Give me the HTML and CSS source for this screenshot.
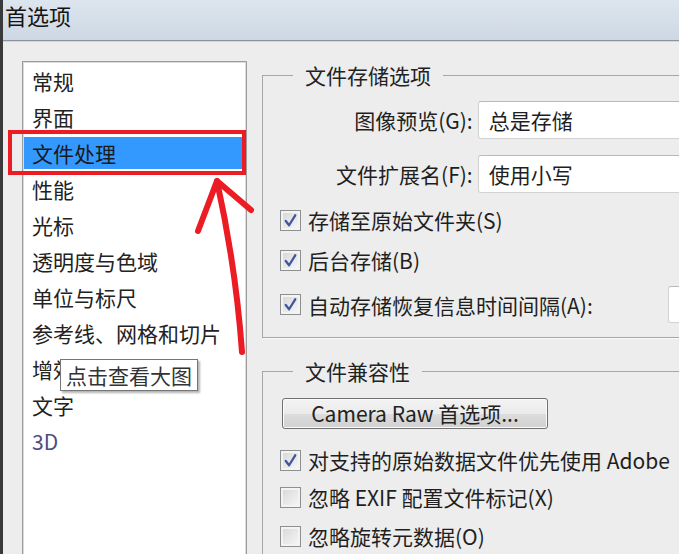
FILE: index.html
```html
<!DOCTYPE html>
<html>
<head>
  <title>首选项</title>
  <meta charset="utf-8">
  <link rel="stylesheet" href="styles.css">
</head>
<body>
  <div class="window">
    <div class="titlebar">首选项</div>

    <div class="content">
      <ul class="nav">
        <li>常规</li>
        <li>界面</li>
        <li class="active">文件处理</li>
        <li>性能</li>
        <li>光标</li>
        <li>透明度与色域</li>
        <li>单位与标尺</li>
        <li>参考线、网格和切片</li>
        <li>增效工具</li>
        <li>文字</li>
        <li class="dim">3D</li>
      </ul>

      <div class="panel">
        <fieldset class="group group-save">
          <legend>文件存储选项</legend>
          <div class="field-row first">
            <label>图像预览(G):</label>
            <div class="select">总是存储</div>
          </div>
          <div class="field-row">
            <label>文件扩展名(F):</label>
            <div class="select">使用小写</div>
          </div>
          <div class="check-row r1">
            <span class="box checked"><svg viewBox="0 0 20 20"><path d="M5 10.5 L8.5 15 L15 4.5"/></svg></span>
            <span>存储至原始文件夹(S)</span>
          </div>
          <div class="check-row r2">
            <span class="box checked"><svg viewBox="0 0 20 20"><path d="M5 10.5 L8.5 15 L15 4.5"/></svg></span>
            <span>后台存储(B)</span>
          </div>
          <div class="check-row r3">
            <span class="box checked"><svg viewBox="0 0 20 20"><path d="M5 10.5 L8.5 15 L15 4.5"/></svg></span>
            <span>自动存储恢复信息时间间隔(A):</span>
            <div class="num-input"></div>
          </div>
        </fieldset>

        <fieldset class="group group-compat">
          <legend>文件兼容性</legend>
          <div class="btn">Camera Raw 首选项...</div>
          <div class="check-row c1">
            <span class="box checked"><svg viewBox="0 0 20 20"><path d="M5 10.5 L8.5 15 L15 4.5"/></svg></span>
            <span>对支持的原始数据文件优先使用 Adobe</span>
          </div>
          <div class="check-row c2">
            <span class="box"></span>
            <span>忽略 EXIF 配置文件标记(X)</span>
          </div>
          <div class="check-row c3">
            <span class="box"></span>
            <span>忽略旋转元数据(O)</span>
          </div>
        </fieldset>
      </div>
    </div>

    <div class="tooltip">点击查看大图</div>

    <!-- red hand-drawn markup over the screenshot -->
    <svg class="markup" viewBox="0 0 679 554">
      <rect x="10" y="132" width="234" height="41" />
      <path d="M242 352 Q236 268 217 181" />
      <path d="M198 231 L217 181 L251 210" />
    </svg>
  </div>
</body>
</html>
```

FILE: styles.css
```css
* {
  margin: 0;
  padding: 0;
  box-sizing: border-box;
}

body {
  font-family: "Noto Sans CJK SC", "Noto Sans", sans-serif;
  color: #1f1f1f;
  background: #ededed;
  overflow: hidden;
}

.window {
  position: relative;
  width: 679px;
  height: 554px;
  overflow: hidden;
  background: #ededed;
  border-left: 3px solid #3a3a3a;
}

.titlebar {
  height: 41px;
  padding-left: 2px;
  font-size: 22px;
  line-height: 30px;
  color: #141414;
  background: linear-gradient(180deg, #dde5ee 0%, #cdd8e4 100%);
  border-bottom: 1px solid #8c939a;
  box-shadow: 0 1px 0 #d6d6d6;
}

.content {
  display: flex;
  padding: 20px 0 0 19px;
}

/* left category list */
.nav {
  list-style: none;
  width: 225px;
  height: 520px;
  flex-shrink: 0;
  background: #fff;
  border: 1px solid #9c9c9c;
  box-shadow: inset 0 0 0 1px #dcdcdc;
  padding: 3px 3px 0 1px;
}

.nav li {
  height: 32px;
  margin-bottom: 4px;
  padding-left: 8px;
  font-size: 21px;
  line-height: 32px;
  color: #222;
  white-space: nowrap;
}

.nav li.active {
  background: #3399ff;
  color: #1a1a1a;
}

.nav li.dim {
  color: #4d4d82;
}

/* right settings panel */
.panel {
  width: 470px;
  flex-shrink: 0;
  margin: 2px 0 0 15px;
}

.group {
  border: 1px solid #a6a6a6;
  box-shadow: 1px 1px 0 #fafafa;
  padding: 0 0 14px 17px;
  min-width: 0;
}

.group-compat {
  margin-top: 21px;
  height: 300px;
}

.group legend {
  margin-left: 13px;
  padding: 0 12px;
  font-size: 21px;
  line-height: 24px;
  color: #222;
}

.field-row {
  display: flex;
  align-items: center;
  height: 38px;
  margin-top: 16px;
  font-size: 21px;
}

.field-row.first {
  margin-top: 14px;
}

.field-row label {
  width: 198px;
  text-align: right;
  white-space: nowrap;
}

.select {
  width: 260px;
  height: 38px;
  margin-left: 5px;
  padding-left: 10px;
  display: flex;
  align-items: center;
  background: #fff;
  border: 1px solid #d2d2d2;
  border-top-color: #b9b9b9;
  border-radius: 3px;
}

.check-row {
  display: flex;
  align-items: center;
  height: 30px;
  font-size: 21px;
  white-space: nowrap;
}

.check-row.r1 { margin-top: 12px; }
.check-row.r2 { margin-top: 10px; }
.check-row.r3 { margin-top: 11px; height: 37px; }
.check-row.c1 { margin-top: 16px; }
.check-row.c2 { margin-top: 7px; }
.check-row.c3 { margin-top: 9px; }

.box {
  width: 21px;
  height: 21px;
  flex-shrink: 0;
  margin-right: 7px;
  border: 1px solid #8e8f8f;
  background: linear-gradient(135deg, #d6d6d6 0%, #f8f8f8 100%);
  box-shadow: inset 0 0 0 2px #f3f3f3;
}

.box svg {
  display: block;
  width: 19px;
  height: 19px;
}

.box svg path {
  fill: none;
  stroke: #3f56a0;
  stroke-width: 2.4;
  stroke-linecap: round;
  stroke-linejoin: round;
}

.num-input {
  width: 63px;
  height: 37px;
  margin-left: auto;
  background: #fff;
  border: 1px solid #d2d2d2;
  border-top-color: #b9b9b9;
  border-radius: 3px;
}

.btn {
  width: 266px;
  height: 31px;
  margin: 15px 0 0 2px;
  font-size: 21px;
  line-height: 28px;
  text-align: center;
  color: #222;
  border: 1px solid #707070;
  border-radius: 3px;
  background: linear-gradient(180deg, #f3f3f3 0%, #ebebeb 50%, #dddddd 51%, #d0d0d0 100%);
  box-shadow: inset 0 0 0 1px #fbfbfb;
}

/* overlays */
.tooltip {
  position: absolute;
  left: 57px;
  top: 359px;
  width: 138px;
  height: 32px;
  padding-left: 5px;
  font-size: 21px;
  line-height: 30px;
  color: #333;
  background: #fff;
  border: 1px solid #767676;
  box-shadow: 2px 2px 2px rgba(0, 0, 0, 0.3);
  white-space: nowrap;
}

.markup {
  position: absolute;
  left: -3px;
  top: 0;
  width: 679px;
  height: 554px;
  pointer-events: none;
}

.markup rect,
.markup path {
  fill: none;
  stroke: #ec1c24;
  stroke-linecap: round;
  stroke-linejoin: round;
}

.markup rect {
  stroke-width: 4;
  stroke-linecap: butt;
  stroke-linejoin: miter;
}

.markup path {
  stroke-width: 6;
}
```
